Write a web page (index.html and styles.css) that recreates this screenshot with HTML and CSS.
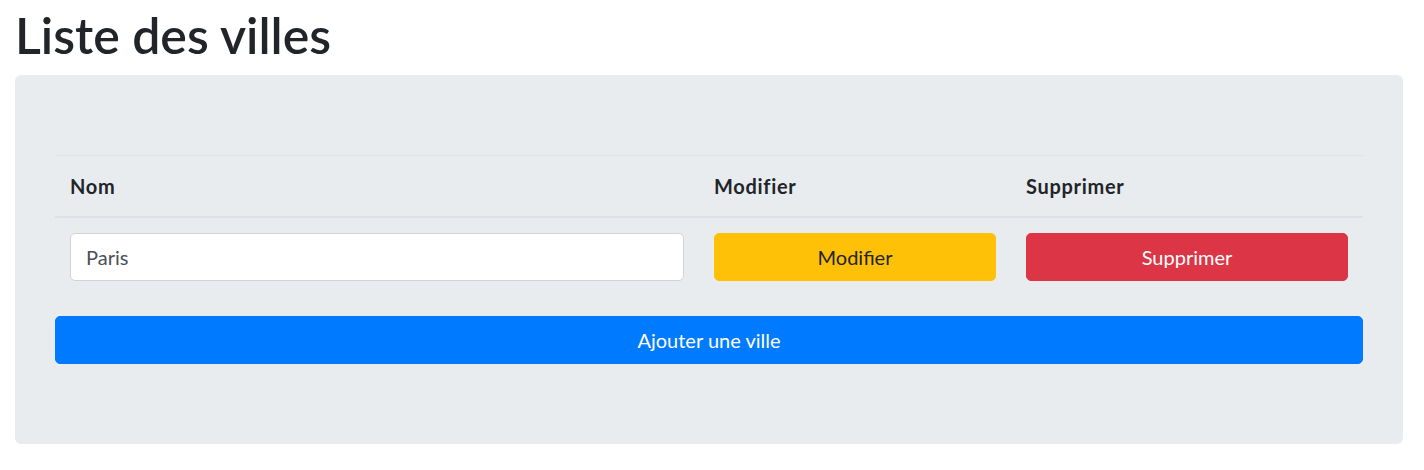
FILE: index.html
```html
<!DOCTYPE html>
<html lang="fr">
<head>
<meta charset="utf-8">
<title>Liste des villes</title>
<link rel="stylesheet" href="styles.css">
</head>
<body>
<div class="container">
  <h1 class="title">Liste des villes</h1>
  <div class="jumbotron">
    <table class="table">
      <colgroup>
        <col class="col-name">
        <col class="col-edit">
        <col class="col-delete">
      </colgroup>
      <thead>
        <tr>
          <th>Nom</th>
          <th>Modifier</th>
          <th>Supprimer</th>
        </tr>
      </thead>
      <tbody>
        <tr>
          <td><input class="form-control" type="text" value="Paris"></td>
          <td><button class="btn btn-warning">Modifier</button></td>
          <td><button class="btn btn-danger">Supprimer</button></td>
        </tr>
      </tbody>
    </table>
    <button class="btn btn-primary">Ajouter une ville</button>
  </div>
</div>
</body>
</html>
```
FILE: styles.css
```css
* { box-sizing: border-box; }

body {
  margin: 0;
  font-family: Lato, "Noto Sans", sans-serif;
  font-size: 20px;
  line-height: 30px;
  color: #212529;
  background: #fff;
}

.container {
  padding: 5px 21px 0 15px;
}

.title {
  margin: 0 0 10px;
  font-size: 50px;
  line-height: 60px;
  font-weight: 600;
  color: #212529;
}

.jumbotron {
  background: #e9ecef;
  border-radius: 6px;
  padding: 80px 40px;
}

.table {
  width: 100%;
  border-collapse: collapse;
  margin-bottom: 20px;
  color: #212529;
}

.col-name { width: 644px; }
.col-edit { width: 312px; }
.col-delete { width: 352px; }

.table th,
.table td {
  padding: 15px;
  text-align: left;
  vertical-align: top;
}

.table th {
  font-weight: 700;
  letter-spacing: 0.7px;
  border-top: 1px solid #dee2e6;
  border-bottom: 2px solid #dee2e6;
}

.table td {
  border-top: 1px solid #dee2e6;
}

.form-control {
  display: block;
  width: 100%;
  height: 48px;
  padding: 8px 15px;
  font: inherit;
  font-size: 20px;
  line-height: 30px;
  color: #495057;
  background: #fff;
  border: 1px solid #ced4da;
  border-radius: 5px;
}

.btn {
  display: block;
  width: 100%;
  height: 48px;
  padding: 8px 15px;
  font: inherit;
  font-size: 20px;
  line-height: 30px;
  text-align: center;
  border: 1px solid transparent;
  border-radius: 5px;
  cursor: pointer;
}

.btn-warning {
  background: #ffc107;
  border-color: #ffc107;
  color: #212529;
}

.btn-danger {
  background: #dc3545;
  border-color: #dc3545;
  color: #fff;
}

.btn-primary {
  background: #007bff;
  border-color: #007bff;
  color: #fff;
}
```
